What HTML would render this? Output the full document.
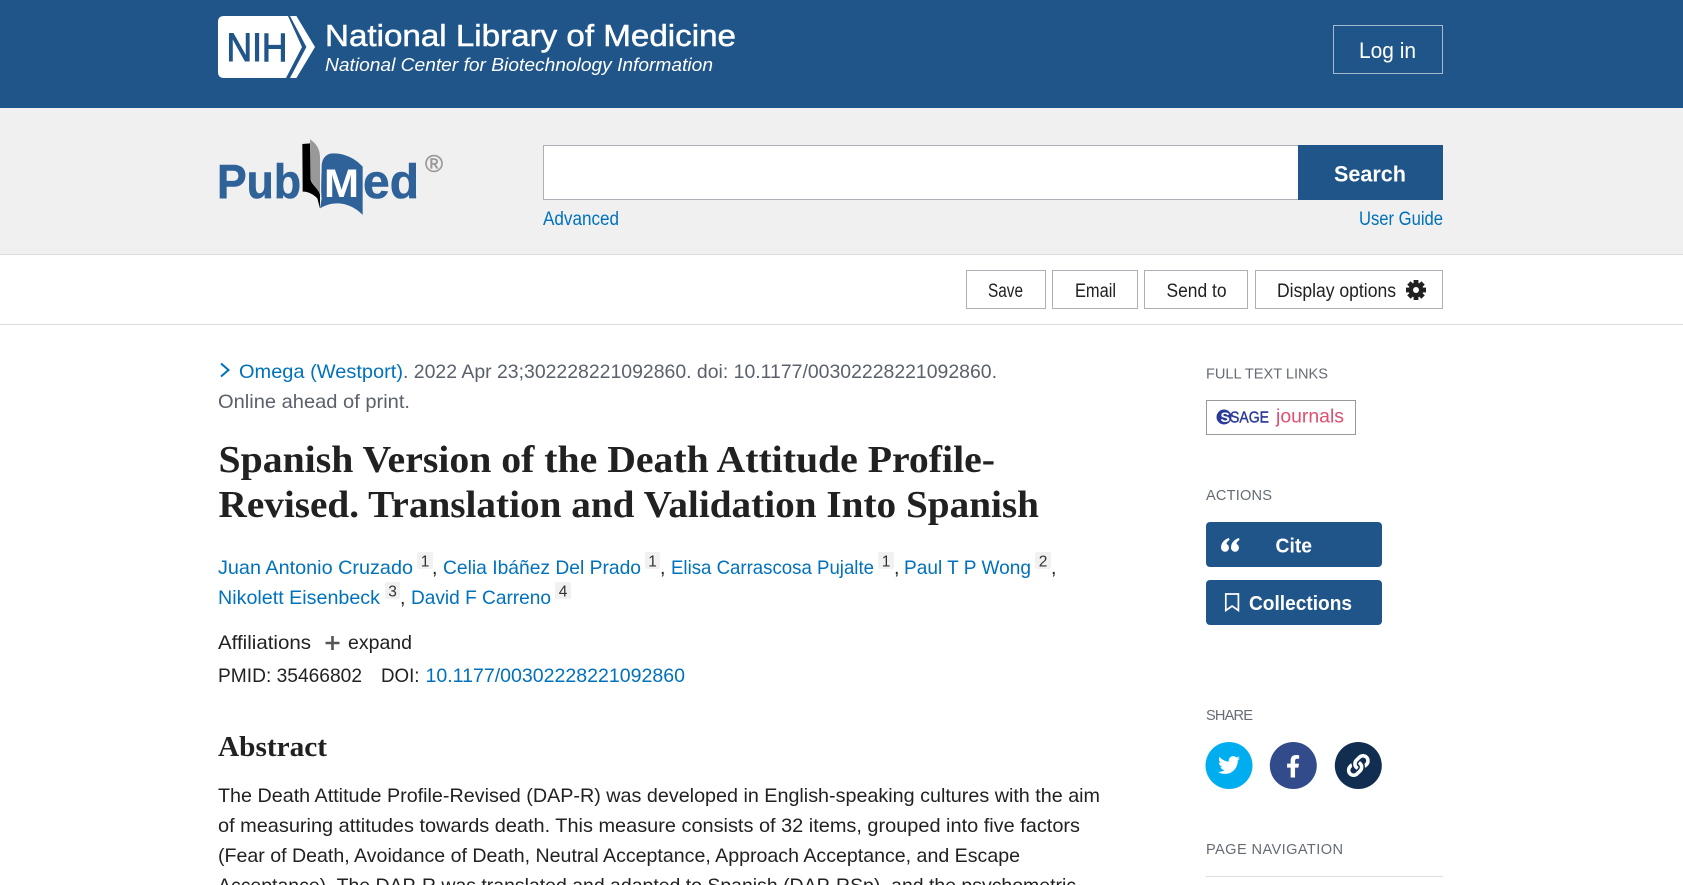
<!DOCTYPE html>
<html lang="en">
<head>
<meta charset="utf-8">
<title>Spanish Version of the Death Attitude Profile-Revised - PubMed</title>
<style>
html,body{margin:0;padding:0;width:1683px;height:885px;overflow:hidden;background:#fff}
.box{position:absolute;box-sizing:border-box}
svg{position:absolute;left:0;top:0}
text{font-family:"Liberation Sans",sans-serif;font-size:19.5px;fill:#212121}
.l{fill:#0071bc}
.g{fill:#5b616b}
.h{font-size:14.6px;fill:#666c75}
.s{font-family:"Liberation Serif",serif;font-weight:700;font-size:38px;fill:#212121}
.b{font-weight:700;fill:#fff}
.t{font-size:19px;fill:#212121}
.n{font-size:15.5px;fill:#333;text-anchor:middle}
</style>
</head>
<body>
<div class="box" style="left:0;top:0;width:1683px;height:108px;background:#20558a"></div>
<div class="box" style="left:0;top:108px;width:1683px;height:147px;background:#f0f0f0;border-bottom:1px solid #dcdcdc"></div>
<div class="box" style="left:0;top:255px;width:1683px;height:70px;background:#fff;border-bottom:1px solid #dcdcdc"></div>
<div class="box" style="left:1333px;top:25px;width:110px;height:49px;border:1px solid #a6bbd0"></div>
<div class="box" style="left:543px;top:145px;width:756px;height:55px;background:#fff;border:1px solid #aeb0b5"></div>
<div class="box" style="left:1298px;top:145px;width:145px;height:55px;background:#20558a"></div>
<div class="box" style="left:966px;top:270px;width:80px;height:39px;border:1px solid #aeb0b5"></div>
<div class="box" style="left:1052px;top:270px;width:86px;height:39px;border:1px solid #aeb0b5"></div>
<div class="box" style="left:1144px;top:270px;width:104px;height:39px;border:1px solid #aeb0b5"></div>
<div class="box" style="left:1255px;top:270px;width:188px;height:39px;border:1px solid #aeb0b5"></div>
<div class="box" style="left:1206px;top:400px;width:150px;height:35px;border:1px solid #999;background:#fff"></div>
<div class="box" style="left:1206px;top:522px;width:176px;height:45px;background:#20558a;border-radius:4px"></div>
<div class="box" style="left:1206px;top:580px;width:176px;height:45px;background:#20558a;border-radius:4px"></div>
<div class="box" style="left:1206px;top:876px;width:237px;height:1px;background:#ddd"></div>

<div class="box" style="left:417px;top:552px;width:16px;height:17px;background:#f1f1f1;border-radius:2px"></div>
<div class="box" style="left:645px;top:552px;width:15px;height:17px;background:#f1f1f1;border-radius:2px"></div>
<div class="box" style="left:878px;top:552px;width:16px;height:17px;background:#f1f1f1;border-radius:2px"></div>
<div class="box" style="left:1035px;top:552px;width:16px;height:17px;background:#f1f1f1;border-radius:2px"></div>
<div class="box" style="left:385px;top:582px;width:15px;height:17px;background:#f1f1f1;border-radius:2px"></div>
<div class="box" style="left:555px;top:582px;width:16px;height:17px;background:#f1f1f1;border-radius:2px"></div>

<svg width="1683" height="885" viewBox="0 0 1683 885" xmlns="http://www.w3.org/2000/svg">
<!-- NIH logo -->
<path fill="#fff" d="M224 16H288L302 47L286 78H224Q218 78 218 72V22Q218 16 224 16Z"/>
<path fill="#fff" d="M290 16H296.4L315 47L296.4 78H290L306.4 47Z"/>
<text x="226.5" y="61" textLength="61" lengthAdjust="spacingAndGlyphs" style="font-size:40px;fill:#20558a;stroke:#20558a;stroke-width:1">NIH</text>
<text x="325" y="46" textLength="411" lengthAdjust="spacingAndGlyphs" style="font-size:31px;fill:#fff;stroke:#fff;stroke-width:.5">National Library of Medicine</text>
<text x="325" y="71" textLength="388" lengthAdjust="spacingAndGlyphs" style="font-size:18.5px;font-style:italic;fill:#fff">National Center for Biotechnology Information</text>
<text x="1359" y="58" textLength="57" lengthAdjust="spacingAndGlyphs" style="font-size:22px;fill:#fff">Log in</text>

<!-- PubMed logo -->
<text x="217" y="198" textLength="84" lengthAdjust="spacingAndGlyphs" style="font-size:48px;font-weight:700;fill:#2f6299;stroke:#2f6299;stroke-width:.6">Pub</text>
<g transform="translate(210 130) scale(.33333)">
<path fill="#999" d="M300 28C320 40 330 60 330 80L330 200C325 180 305 160 303 150Z"/>
<path fill="#000" d="M277 42L300 40L302 150C306 165 328 180 330 195L330 235L322 205C305 188 290 185 278 185Z"/>
<path fill="#2f6299" d="M330 235L335 205C332 180 335 130 335 110C335 90 345 70 370 70C410 70 440 90 458 110L458 255C430 225 380 205 330 235Z"/>
</g>
<text x="324" y="197" textLength="35" lengthAdjust="spacingAndGlyphs" style="font-size:40px;font-weight:700;fill:#fff">M</text>
<text x="363" y="198" textLength="56" lengthAdjust="spacingAndGlyphs" style="font-size:48px;font-weight:700;fill:#2f6299;stroke:#2f6299;stroke-width:.6">ed</text>
<text x="425" y="172" textLength="18" lengthAdjust="spacingAndGlyphs" style="font-size:24px;fill:#999;stroke:#999;stroke-width:.5">®</text>

<text class="b" x="1334" y="181.5" textLength="72" lengthAdjust="spacingAndGlyphs" style="font-size:22px">Search</text>
<text class="l" x="543" y="225" textLength="76" lengthAdjust="spacingAndGlyphs" style="font-size:19px">Advanced</text>
<text class="l" x="1359" y="225" textLength="84" lengthAdjust="spacingAndGlyphs" style="font-size:19px">User Guide</text>

<!-- toolbar -->
<text class="t" x="988" y="297" textLength="35" lengthAdjust="spacingAndGlyphs">Save</text>
<text class="t" x="1075" y="297" textLength="41" lengthAdjust="spacingAndGlyphs">Email</text>
<text class="t" x="1166.5" y="297" textLength="60" lengthAdjust="spacingAndGlyphs">Send to</text>
<text class="t" x="1277" y="297" textLength="119" lengthAdjust="spacingAndGlyphs">Display options</text>
<g transform="translate(1416 290)" fill="#212121">
<rect x="-2.4" y="-10" width="4.8" height="20"/>
<rect x="-2.4" y="-10" width="4.8" height="20" transform="rotate(45)"/>
<rect x="-2.4" y="-10" width="4.8" height="20" transform="rotate(90)"/>
<rect x="-2.4" y="-10" width="4.8" height="20" transform="rotate(135)"/>
<circle r="7.4"/>
<circle r="3" fill="#fff"/>
</g>

<!-- article -->
<polyline points="221,363.5 228.5,370 221,376.5" fill="none" stroke="#0071bc" stroke-width="2"/>
<text class="l" x="239" y="378" textLength="164" lengthAdjust="spacingAndGlyphs">Omega (Westport)</text>
<text class="g" x="403" y="378" textLength="594" lengthAdjust="spacingAndGlyphs">. 2022 Apr 23;302228221092860. doi: 10.1177/00302228221092860.</text>
<text class="g" x="218" y="408" textLength="192" lengthAdjust="spacingAndGlyphs">Online ahead of print.</text>
<text class="s" x="218.5" y="472" textLength="776.5" lengthAdjust="spacingAndGlyphs">Spanish Version of the Death Attitude Profile-</text>
<text class="s" x="218.5" y="517" textLength="820.5" lengthAdjust="spacingAndGlyphs">Revised. Translation and Validation Into Spanish</text>

<text class="l" x="218" y="574" textLength="195" lengthAdjust="spacingAndGlyphs">Juan Antonio Cruzado</text>
<text class="n" x="425" y="566.5">1</text><text x="432" y="574">,</text>
<text class="l" x="443" y="574" textLength="198" lengthAdjust="spacingAndGlyphs">Celia Ibáñez Del Prado</text>
<text class="n" x="652.5" y="566.5">1</text><text x="660" y="574">,</text>
<text class="l" x="671" y="574" textLength="203" lengthAdjust="spacingAndGlyphs">Elisa Carrascosa Pujalte</text>
<text class="n" x="886" y="566.5">1</text><text x="894" y="574">,</text>
<text class="l" x="904" y="574" textLength="127" lengthAdjust="spacingAndGlyphs">Paul T P Wong</text>
<text class="n" x="1043" y="566.5">2</text><text x="1051" y="574">,</text>
<text class="l" x="218" y="604" textLength="162" lengthAdjust="spacingAndGlyphs">Nikolett Eisenbeck</text>
<text class="n" x="392.5" y="596.5">3</text><text x="400" y="604">,</text>
<text class="l" x="411" y="604" textLength="140" lengthAdjust="spacingAndGlyphs">David F Carreno</text>
<text class="n" x="563" y="596.5">4</text>

<text x="218" y="649" textLength="93" lengthAdjust="spacingAndGlyphs">Affiliations</text>
<path d="M325.5 643H339.5M332.5 636V650" stroke="#555" stroke-width="2.6" fill="none"/>
<text x="348" y="649" textLength="64" lengthAdjust="spacingAndGlyphs">expand</text>
<text x="218" y="682" textLength="144" lengthAdjust="spacingAndGlyphs">PMID: 35466802</text>
<text x="381" y="682" textLength="38.5" lengthAdjust="spacingAndGlyphs">DOI:</text>
<text class="l" x="425.5" y="682" textLength="259.5" lengthAdjust="spacingAndGlyphs">10.1177/00302228221092860</text>

<text class="s" x="218" y="756" textLength="109" lengthAdjust="spacingAndGlyphs" style="font-size:28px">Abstract</text>
<text x="218" y="802" textLength="882" lengthAdjust="spacingAndGlyphs">The Death Attitude Profile-Revised (DAP-R) was developed in English-speaking cultures with the aim</text>
<text x="218" y="832" textLength="862" lengthAdjust="spacingAndGlyphs">of measuring attitudes towards death. This measure consists of 32 items, grouped into five factors</text>
<text x="218" y="862" textLength="802" lengthAdjust="spacingAndGlyphs">(Fear of Death, Avoidance of Death, Neutral Acceptance, Approach Acceptance, and Escape</text>
<text x="218" y="892" textLength="858" lengthAdjust="spacingAndGlyphs">Acceptance). The DAP-R was translated and adapted to Spanish (DAP-RSp), and the psychometric</text>

<!-- sidebar -->
<text class="h" x="1206" y="378.5" textLength="122" lengthAdjust="spacing">FULL TEXT LINKS</text>
<circle cx="1224" cy="417" r="7.5" fill="#2a3a9a"/>
<text x="1220.5" y="422" style="font-size:14px;font-weight:700;fill:#fff">S</text>
<text x="1230" y="422.7" textLength="39" lengthAdjust="spacingAndGlyphs" style="font-size:15.5px;fill:#2a3a9a;stroke:#2a3a9a;stroke-width:.4">SAGE</text>
<text x="1276" y="422.7" textLength="68" lengthAdjust="spacingAndGlyphs" style="font-size:19.5px;fill:#e0506e">journals</text>

<text class="h" x="1206" y="500" textLength="66" lengthAdjust="spacing">ACTIONS</text>
<path fill="#fff" d="M1221 548C1221 543 1224 539.5 1229 538L1229.5 540C1227.5 541 1226.5 542.5 1226.5 544A4 4 0 1 1 1221 548ZM1231 548C1231 543 1234 539.5 1239 538L1239.5 540C1237.5 541 1236.5 542.5 1236.5 544A4 4 0 1 1 1231 548Z"/>
<text class="b" x="1275.5" y="552.5" textLength="36.5" lengthAdjust="spacingAndGlyphs" style="font-size:20px">Cite</text>
<path d="M1225.8 594H1238.4V610.5L1232.1 606L1225.8 610.5Z" fill="none" stroke="#fff" stroke-width="1.7"/>
<text class="b" x="1249" y="610" textLength="103" lengthAdjust="spacingAndGlyphs" style="font-size:20px">Collections</text>

<text class="h" x="1206" y="720" textLength="47" lengthAdjust="spacing">SHARE</text>
<circle cx="1229" cy="765.5" r="23.5" fill="#00aeef"/>
<circle cx="1293.3" cy="765.5" r="23.5" fill="#324c8b"/>
<circle cx="1358.3" cy="765.5" r="23.5" fill="#112e51"/>
<svg x="1218" y="754" width="22" height="22" viewBox="0 0 512 512"><path fill="#fff" d="M459.37 151.716c.325 4.548.325 9.097.325 13.645 0 138.72-105.583 298.558-298.558 298.558-59.452 0-114.68-17.219-161.137-47.106 8.447.974 16.568 1.299 25.34 1.299 49.055 0 94.213-16.568 130.274-44.832-46.132-.975-84.792-31.188-98.112-72.772 6.498.974 12.995 1.624 19.818 1.624 9.421 0 18.843-1.3 27.614-3.573-48.081-9.747-84.143-51.98-84.143-102.985v-1.299c13.969 7.797 30.214 12.67 47.431 13.319-28.264-18.843-46.781-51.005-46.781-87.391 0-19.492 5.197-37.36 14.294-52.954 51.655 63.675 129.3 105.258 216.365 109.807-1.624-7.797-2.599-15.918-2.599-24.04 0-57.828 46.782-104.934 104.934-104.934 30.213 0 57.502 12.67 76.67 33.137 23.715-4.548 46.456-13.32 66.599-25.34-7.798 24.366-24.366 44.833-46.132 57.827 21.117-2.273 41.584-8.122 60.426-16.243-14.292 20.791-32.161 39.308-52.628 54.253z"/></svg>
<svg x="1286" y="755" width="14.2" height="22.5" viewBox="0 0 320 512"><path fill="#fff" d="M279.14 288l14.22-92.66h-88.91v-60.13c0-25.35 12.42-50.06 52.24-50.06h40.42V6.26S260.43 0 225.36 0c-73.22 0-121.08 44.38-121.08 124.72v70.62H22.89V288h81.39v224h100.17V288z"/></svg>
<svg x="1346.8" y="754" width="23" height="23" viewBox="0 0 512 512"><path fill="#fff" d="M326.612 185.391c59.747 59.809 58.927 155.698.36 214.59-.11.12-.24.25-.36.37l-67.2 67.2c-59.27 59.27-155.699 59.262-214.96 0-59.27-59.26-59.27-155.7 0-214.96l37.106-37.106c9.84-9.84 26.786-3.3 27.294 10.606.648 17.722 3.826 35.527 9.69 52.721 1.986 5.822.567 12.262-3.783 16.612l-13.087 13.087c-28.026 28.026-28.905 73.66-1.155 101.96 28.024 28.579 74.086 28.749 102.325.51l67.2-67.19c28.191-28.191 28.073-73.757 0-101.83-3.701-3.694-7.429-6.564-10.341-8.569a16.037 16.037 0 0 1-6.947-12.606c-.396-10.567 3.348-21.456 11.698-29.806l21.054-21.055c5.521-5.521 14.182-6.199 20.584-1.731a152.482 152.482 0 0 1 20.522 17.197zM467.547 44.449c-59.261-59.262-155.69-59.27-214.96 0l-67.2 67.2c-.12.12-.25.25-.36.37-58.566 58.892-59.387 154.781.36 214.59a152.454 152.454 0 0 0 20.521 17.196c6.402 4.468 15.064 3.789 20.584-1.731l21.054-21.055c8.35-8.35 12.094-19.239 11.698-29.806a16.037 16.037 0 0 0-6.947-12.606c-2.912-2.005-6.64-4.875-10.341-8.569-28.073-28.073-28.191-73.639 0-101.83l67.2-67.19c28.239-28.239 74.3-28.069 102.325.51 27.75 28.3 26.872 73.934-1.155 101.96l-13.087 13.087c-4.35 4.35-5.769 10.79-3.783 16.612 5.864 17.194 9.042 34.999 9.69 52.721.509 13.906 17.454 20.446 27.294 10.606l37.106-37.106c59.271-59.259 59.271-155.699.001-214.959z"/></svg>
<text class="h" x="1206" y="854" textLength="137" lengthAdjust="spacing">PAGE NAVIGATION</text>
</svg>
</body>
</html>
